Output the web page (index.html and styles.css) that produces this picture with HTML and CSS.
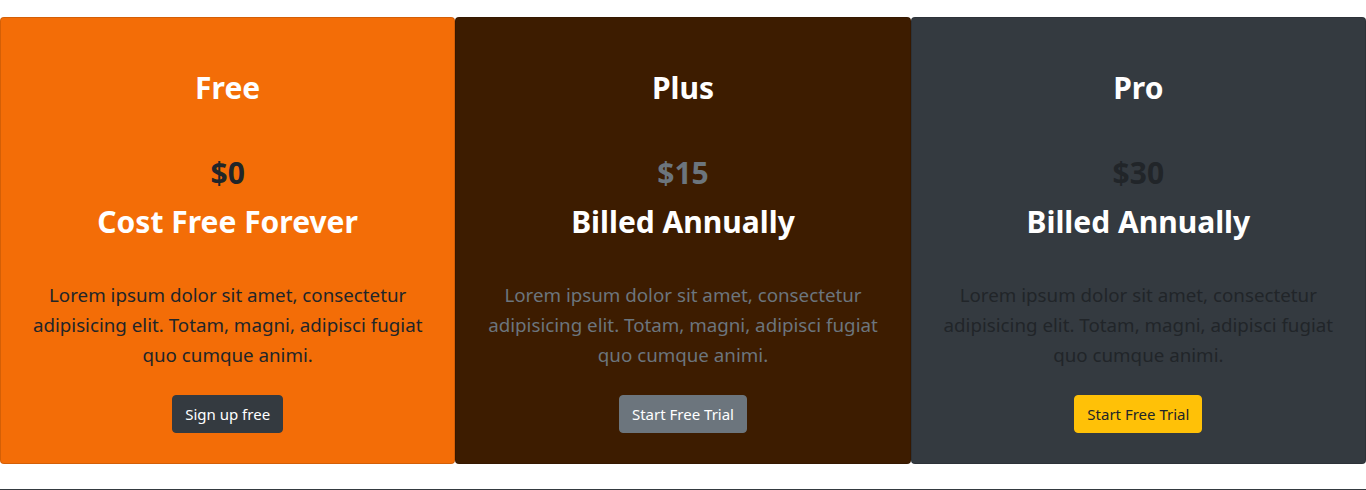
FILE: index.html
```html
<!DOCTYPE html>
<html lang="en">
<head>
<meta charset="utf-8">
<title>Pricing</title>
<link rel="stylesheet" href="styles.css">
</head>
<body>
<section class="pricing">
  <div class="card card-free">
    <h2 class="plan">Free</h2>
    <h2 class="price">$0</h2>
    <h2 class="billing">Cost Free Forever</h2>
    <p class="lead">Lorem ipsum dolor sit amet, consectetur adipisicing elit. Totam, magni, adipisci fugiat quo cumque animi.</p>
    <a class="btn btn-dark" href="#">Sign up free</a>
  </div>
  <div class="card card-plus">
    <h2 class="plan">Plus</h2>
    <h2 class="price">$15</h2>
    <h2 class="billing">Billed Annually</h2>
    <p class="lead">Lorem ipsum dolor sit amet, consectetur adipisicing elit. Totam, magni, adipisci fugiat quo cumque animi.</p>
    <a class="btn btn-secondary" href="#">Start Free Trial</a>
  </div>
  <div class="card card-pro">
    <h2 class="plan">Pro</h2>
    <h2 class="price">$30</h2>
    <h2 class="billing">Billed Annually</h2>
    <p class="lead">Lorem ipsum dolor sit amet, consectetur adipisicing elit. Totam, magni, adipisci fugiat quo cumque animi.</p>
    <a class="btn btn-warning" href="#">Start Free Trial</a>
  </div>
</section>
<hr class="divider">
</body>
</html>
```
FILE: styles.css
```css
html, body {
  margin: 0;
  padding: 0;
  background: #fff;
}
body {
  font-family: "Noto Sans", "Open Sans", sans-serif;
  color: #212529;
  width: 1366px;
  height: 490px;
  overflow: hidden;
}
.pricing {
  display: grid;
  grid-template-columns: 1fr 1fr 1fr;
  padding-top: 17px;
}
.card {
  display: flex;
  flex-direction: column;
  align-items: center;
  text-align: center;
  border: 1px solid rgba(0, 0, 0, 0.125);
  border-radius: 4px;
  padding: 51px 24px 30px;
  height: 447px;
  box-sizing: border-box;
}
.card-free { background: #f36d07; }
.card-plus { background: #3d1c00; }
.card-pro { background: #343a40; }

.plan, .price, .billing {
  margin: 0;
  font-size: 30px;
  line-height: 38px;
  font-weight: 700;
  color: #fff;
}
.price {
  margin-top: 47px;
  color: #212529;
}
.card-plus .price { color: #6c757d; }
.billing {
  margin-top: 11px;
}
.lead {
  margin: 39px 0 0;
  font-size: 18.75px;
  line-height: 30px;
  font-weight: 400;
  color: #212529;
}
.card-plus .lead { color: #6c757d; }

.btn {
  margin-top: 25px;
  display: inline-block;
  font-size: 15px;
  line-height: 24px;
  padding: 6px 12px;
  border: 1px solid transparent;
  border-radius: 4px;
  text-decoration: none;
}
.btn-dark { background: #343a40; border-color: #343a40; color: #fff; }
.btn-secondary { background: #6c757d; border-color: #6c757d; color: #fff; }
.btn-warning { background: #ffc107; border-color: #ffc107; color: #212529; }

.divider {
  margin: 25px 0 0;
  border: 0;
  border-top: 1px solid #343a40;
  height: 0;
}
```
